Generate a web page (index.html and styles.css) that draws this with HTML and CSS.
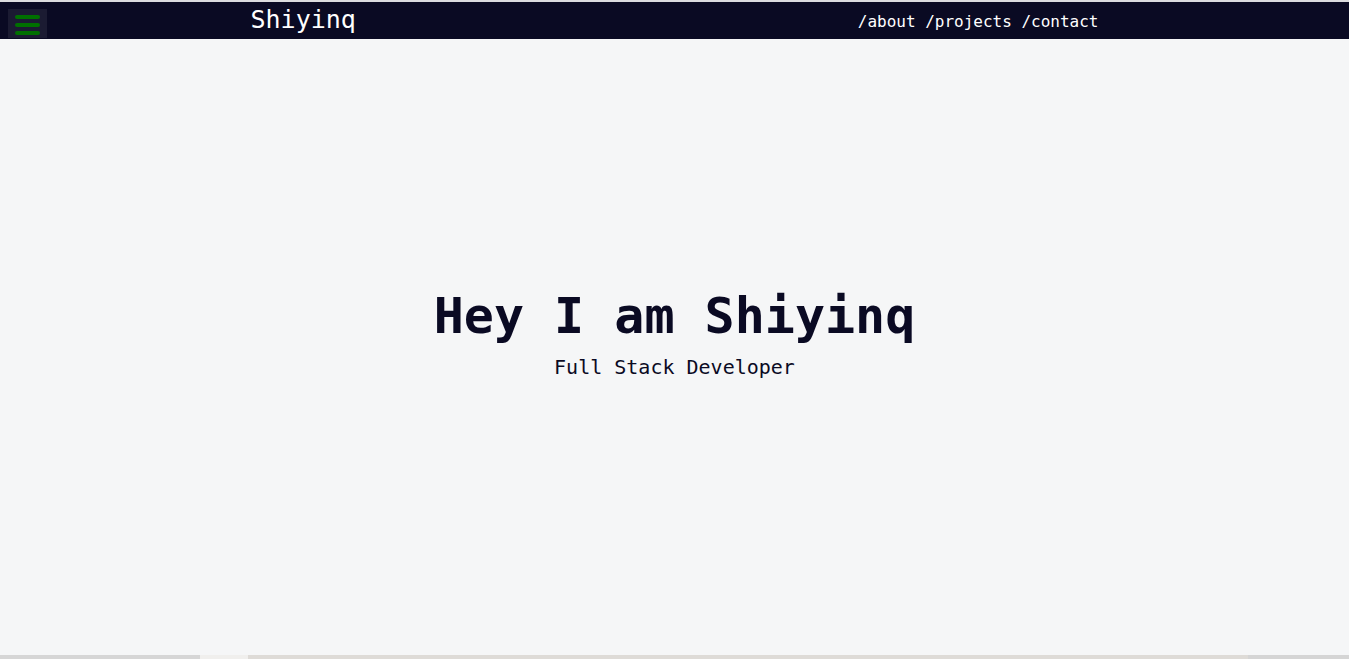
FILE: index.html
```html
<!DOCTYPE html>
<html lang="en">
<head>
<meta charset="utf-8">
<title>Shiyinq</title>
<link rel="stylesheet" href="styles.css">
</head>
<body>
  <div class="topline"></div>
  <header class="navbar">
    <div class="nav-inner">
      <a class="brand" href="#">Shiyinq</a>
      <nav class="links">
        <a href="#">/about</a>
        <a href="#">/projects</a>
        <a href="#">/contact</a>
      </nav>
    </div>
    <button class="menu-btn" aria-label="menu">
      <span></span><span></span><span></span>
    </button>
  </header>
  <main class="hero">
    <h1 class="title">Hey I am Shiyinq</h1>
    <p class="subtitle">Full Stack Developer</p>
  </main>
  <div class="bottom-strip">
    <span class="seg seg-a"></span>
    <span class="seg seg-b"></span>
    <span class="seg seg-c"></span>
    <span class="seg seg-d"></span>
  </div>
</body>
</html>
```
FILE: styles.css
```css
* { box-sizing: border-box; }
html, body { margin: 0; padding: 0; }
body {
  background: #f5f6f7;
  font-family: "DejaVu Sans Mono", "Liberation Mono", monospace;
  color: #0a0a23;
  height: 659px;
  overflow: hidden;
}
.topline { height: 2px; background: #dcdcdf; }
.navbar {
  position: relative;
  height: 37px;
  background: #0a0a23;
}
.nav-inner {
  width: 848px;
  margin: 0 auto;
  height: 100%;
  display: flex;
  align-items: center;
  justify-content: space-between;
}
.brand {
  color: #ffffff;
  text-decoration: none;
  font-size: 25px;
  line-height: 30px;
  margin-top: -1px;
}
.links { display: flex; gap: 9.6px; margin-top: 2px; }
.links a {
  color: #ffffff;
  text-decoration: none;
  font-size: 16px;
  font-weight: 500;
  line-height: 20px;
}
.menu-btn {
  position: absolute;
  left: 8px;
  top: 7px;
  width: 39px;
  height: 29px;
  background: #1b1b32;
  border: none;
  padding: 6px 0 0 7px;
  display: flex;
  flex-direction: column;
  gap: 4px;
}
.menu-btn span {
  display: block;
  width: 25px;
  height: 4px;
  border-radius: 2px;
  background: #007000;
}
.hero {
  height: 616px;
  padding-top: 247px;
  display: flex;
  flex-direction: column;
  align-items: center;
}
.title {
  margin: 0;
  font-size: 50px;
  line-height: 60px;
  font-weight: bold;
  color: #0a0a23;
}
.subtitle {
  margin: 9px 0 0;
  font-size: 20px;
  line-height: 24px;
  color: #0a0a23;
}
.bottom-strip { display: flex; height: 4px; }
.seg { display: block; height: 4px; }
.seg-a { width: 200px; background: #d6d6d6; }
.seg-b { width: 48px; background: #f0efed; }
.seg-c { width: 1000px; background: #dedbd7; }
.seg-d { flex: 1; background: #d5d5d5; }
```
